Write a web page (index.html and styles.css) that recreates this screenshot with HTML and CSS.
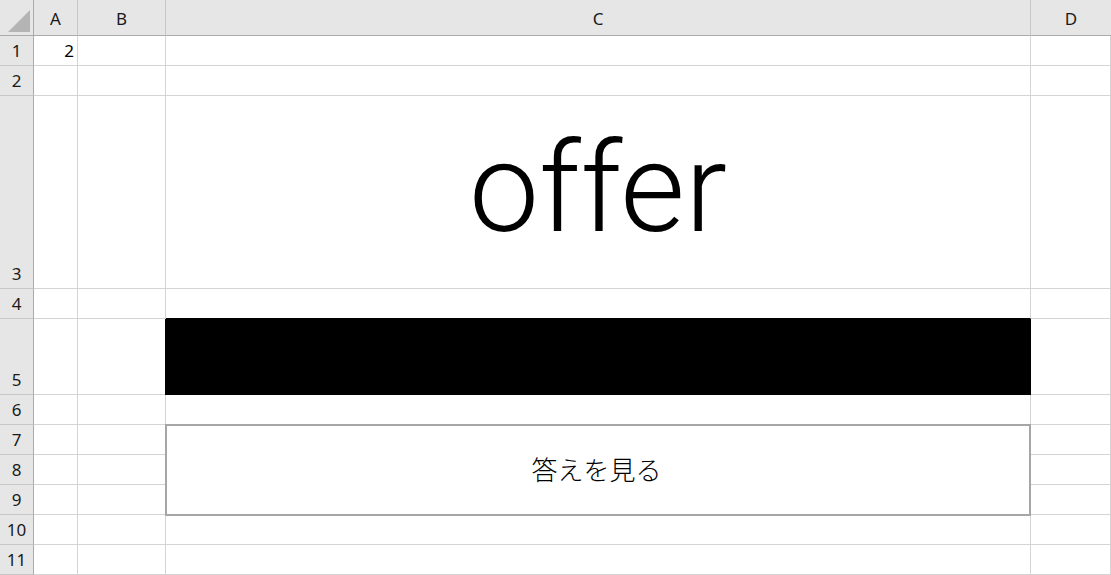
FILE: index.html
```html
<!DOCTYPE html>
<html lang="ja">
<head>
<meta charset="utf-8">
<title>offer</title>
<link rel="stylesheet" href="styles.css">
</head>
<body>
<div class="sheet">
  <div class="corner"><svg width="33" height="36" viewBox="0 0 33 36"><polygon points="30,10 30,32 8,32" fill="#b4b4b4"/></svg></div>
  <div class="colhead">A</div>
  <div class="colhead">B</div>
  <div class="colhead">C</div>
  <div class="colhead last">D</div>

  <div class="rowhead">1</div><div class="cell num">2</div><div class="cell"></div><div class="cell"></div><div class="cell"></div>
  <div class="rowhead">2</div><div class="cell"></div><div class="cell"></div><div class="cell"></div><div class="cell"></div>
  <div class="rowhead">3</div><div class="cell"></div><div class="cell"></div><div class="cell word">offer</div><div class="cell"></div>
  <div class="rowhead">4</div><div class="cell"></div><div class="cell"></div><div class="cell above-black"></div><div class="cell"></div>
  <div class="rowhead">5</div><div class="cell"></div><div class="cell"></div><div class="cell black"></div><div class="cell"></div>
  <div class="rowhead">6</div><div class="cell"></div><div class="cell"></div><div class="cell"></div><div class="cell"></div>
  <div class="rowhead">7</div><div class="cell"></div><div class="cell"></div><div class="cell btnwrap"><div class="btn">答えを見る</div></div><div class="cell"></div>
  <div class="rowhead">8</div><div class="cell"></div><div class="cell"></div><div class="cell"></div>
  <div class="rowhead">9</div><div class="cell"></div><div class="cell"></div><div class="cell"></div>
  <div class="rowhead">10</div><div class="cell"></div><div class="cell"></div><div class="cell"></div><div class="cell"></div>
  <div class="rowhead">11</div><div class="cell"></div><div class="cell"></div><div class="cell"></div><div class="cell"></div>
</div>
</body>
</html>
```
FILE: styles.css
```css
html, body {
  margin: 0;
  padding: 0;
  background: #ffffff;
}
body {
  font-family: "Noto Sans CJK JP", "Noto Sans", sans-serif;
  color: #000;
  overflow: hidden;
}
.sheet {
  display: grid;
  grid-template-columns: 34px 44px 88px 865px 80px;
  grid-template-rows: 36px 30px 30px 193px 30px 76px 30px 30px 30px 30px 30px 30px;
  width: 1111px;
  height: 575px;
}
.sheet > div {
  box-sizing: border-box;
}
.corner {
  background: #e6e6e6;
  border-right: 1px solid #ababab;
  border-bottom: 1px solid #ababab;
}
.corner svg { display: block; }
.colhead {
  background: #e6e6e6;
  border-right: 1px solid #c6c6c6;
  border-bottom: 1px solid #ababab;
  display: flex;
  align-items: center;
  justify-content: center;
  font-family: "Noto Sans", "Noto Sans CJK JP", sans-serif;
  font-size: 17px;
  color: #1a1a1a;
  padding-top: 1px;
}
.colhead.last { border-right: none; }
.rowhead {
  background: #e6e6e6;
  border-right: 1px solid #ababab;
  border-bottom: 1px solid #c6c6c6;
  display: flex;
  align-items: flex-end;
  justify-content: center;
  font-family: "Noto Sans", "Noto Sans CJK JP", sans-serif;
  font-size: 17px;
  line-height: 22px;
  color: #1a1a1a;
  padding-bottom: 3px;
}
.cell {
  border-right: 1px solid #d4d4d4;
  border-bottom: 1px solid #d4d4d4;
}
.num {
  display: flex;
  align-items: flex-end;
  justify-content: flex-end;
  font-family: "Noto Sans", sans-serif;
  font-size: 17px;
  line-height: 22px;
  padding: 0 3px 3px 0;
}
.word {
  display: flex;
  align-items: center;
  justify-content: center;
  font-family: Roboto, "Noto Sans", sans-serif;
  font-weight: 300;
  font-size: 125px;
  line-height: 1;
  padding-bottom: 8px;
  letter-spacing: 0;
}
.above-black { border-bottom-color: #000; }
.black {
  background: #000;
  border-color: #000;
  box-shadow: -1px 0 0 #000;
}
.btnwrap {
  grid-row: span 3;
  display: flex;
  border-bottom: none;
}
.btn {
  flex: 1;
  margin: -1px -1px -1px -1px;
  border: 2px solid #a6a6a6;
  background: #fff;
  display: flex;
  align-items: center;
  justify-content: center;
  font-family: "Noto Sans CJK JP", sans-serif;
  font-size: 26px;
  font-weight: 300;
  padding: 0 3px 4px 0;
  position: relative;
  z-index: 1;
}
```
